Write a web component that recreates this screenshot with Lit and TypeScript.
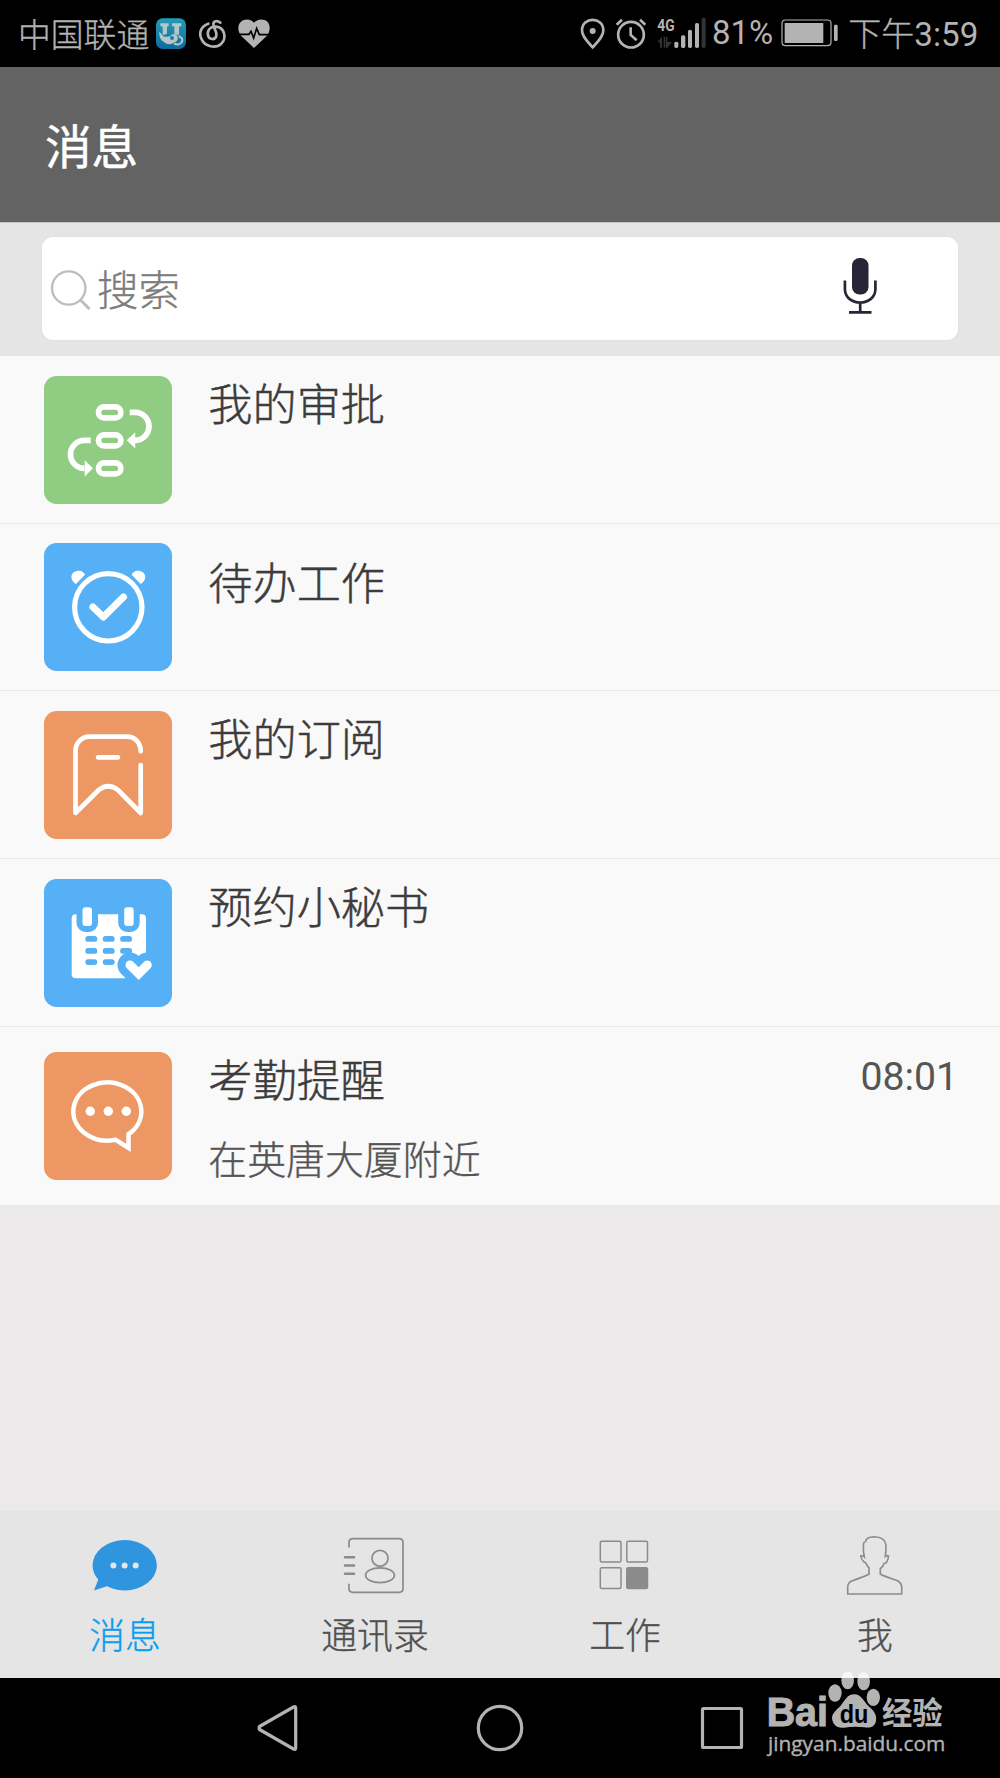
import { LitElement, html, svg, css, TemplateResult } from "lit";
import { customElement, property } from "lit/decorators.js";
import { classMap } from "lit/directives/class-map.js";

const FONT = css`Roboto, "Noto Sans CJK SC", sans-serif`;

/* ---------- status bar ---------- */
@customElement("status-bar")
class StatusBar extends LitElement {
  static styles = css`
    :host { display: flex; height: 67px; background: #000; color: #b3b3b3; font-family: ${FONT}; font-weight: 300; overflow: hidden; }
    svg { display: block; height: 66.67px; flex: none; fill: #b3b3b3; }
    .carrier { width: 134px; padding-left: 18px; box-sizing: content-box; font-size: 32.8px; line-height: 72px; white-space: nowrap; -webkit-text-stroke: 0.35px currentColor; }
    .app { width: 41.33px; }
    .music { width: 40px; }
    .heart { width: 42px; }
    .spacer { flex: 1; }
    .pin { width: 30px; }
    .alarm { width: 41.67px; }
    .signal { width: 58.33px; }
    .percent { width: 66.67px; font-size: 33px; line-height: 65px; white-space: nowrap; padding-left: 2px; box-sizing: border-box; font-weight: 400; }
    .battery { width: 66.67px; }
    .time { width: 156.67px; padding-left: 5px; box-sizing: border-box; font-size: 33px; line-height: 70px; white-space: nowrap; -webkit-text-stroke: 0.35px currentColor; }
    .digits { font-size: 33.200px; font-weight: 400; -webkit-text-stroke: 0; }
    .tiny { font: 700 52px Roboto, sans-serif; }
  `;
  render() {
    return html`
      <span class="carrier">中国联通</span>
      <svg class="app" viewBox="456 0 124 200">
        <defs><linearGradient id="g" x1="0" y1="0" x2="0" y2="1"><stop offset="0" stop-color="#229eb2" /><stop offset="1" stop-color="#10699f" /></linearGradient></defs>
        <rect x="468" y="55" width="90" height="92" rx="20" fill="url(#g)" />
        <path d="M481 70h25v8l-5 2v22l-13 3V80l-7-2zM516 70h28v8l-7 2v24h-14V80l-7-2z" fill="#b4c6c9" />
        <path d="M480 97l10 12q18 5 27-6 14-2 16 9t-9 15q-18 12-32-1-13-4-15-29z" fill="#b4c6c9" />
        <path d="M536 108q17 8 8 20-10 10-22 2" fill="none" stroke="#b4c6c9" stroke-width="6" />
        <circle cx="516" cy="114" r="6" fill="#167da8" />
      </svg>
      <svg class="music" viewBox="580 0 120 200">
        <path d="M626 71C604 78 596 99 606 118C616 140 648 147 665 131C682 113 675 83 649 80C631 78 622 92 625 106C628 120 646 121 650 108C653 93 641 85 641 72C642 61 654 62 662 68" fill="none" stroke="#b3b3b3" stroke-width="8" stroke-linecap="round" />
      </svg>
      <svg class="heart" viewBox="700 0 126 200">
        <path d="M763 144L724 107C712 91 713 69 730 61C744 55 757 60 763 68C770 60 783 55 797 61C813 69 814 91 802 107Z" />
        <path d="M716 103H748L754 94L762 114L771 85L779 104H810" fill="none" stroke="#000" stroke-width="5" />
      </svg>
      <span class="spacer"></span>
      <svg class="pin" viewBox="60 0 90 200">
        <path d="M98 142C84 126 66 111 66 91C66 49 130 49 130 91C130 111 112 126 98 142Z" fill="none" stroke="#b3b3b3" stroke-width="8" />
        <circle cx="98" cy="93" r="9" />
      </svg>
      <svg class="alarm" viewBox="150 0 125 200">
        <g fill="none" stroke="#b3b3b3" stroke-width="8"><circle cx="213" cy="104" r="38.500" /><path d="M170 74L186 59M256 74L240 59M212 82V105L230 121" /></g>
      </svg>
      <svg class="signal" viewBox="275 0 175 200">
        <text class="tiny" x="291" y="94" textLength="52" lengthAdjust="spacingAndGlyphs">4G</text>
        <path d="M291 127l14-17v33h-6v-16zM310 127V110h5v33h-5zM317 110h4v16h14l-14 17h-4z" fill="#333" />
        <rect x="342" y="125" width="12" height="19" rx="5" /><rect x="362" y="106" width="13" height="38" rx="5" /><rect x="383" y="89" width="12" height="55" rx="5" /><rect x="404" y="69" width="12" height="75" rx="5" />
        <rect x="424" y="53" width="12" height="91" rx="5" fill="#333" />
      </svg>
      <span class="percent">81%</span>
      <svg class="battery" viewBox="650 0 200 200">
        <rect x="665" y="60" width="147" height="77" rx="10" fill="none" stroke="#b3b3b3" stroke-width="3.500" />
        <rect x="673" y="69" width="116" height="60" rx="2" /><rect x="821" y="74" width="11" height="49" rx="4" />
      </svg>
      <span class="time">下午<span class="digits">3:59</span></span>
    `;
  }
}

/* ---------- message row ---------- */
const tiles: Record<string, { color: string; art: TemplateResult }> = {
  approval: {
    color: "#90cc82",
    art: svg`<g fill="none" stroke="#fff" stroke-width="5.700">
      <rect x="54.500" y="30.900" width="22.400" height="11" rx="5.500" /><rect x="54.500" y="58.900" width="22.400" height="11" rx="5.500" /><rect x="54.500" y="86.900" width="22.400" height="11" rx="5.500" />
      <path d="M85.700 36.300H91a14 14 0 0 1 0 28M46.700 64.300H40.500a14 14 0 0 0 0 28" /></g>
      <path d="M82.700 64.300L91.200 56.300V72.500ZM49 92.300L40.700 84.200V100.500Z" fill="#fff" />`,
  },
  todo: {
    color: "#55b0f5",
    art: svg`<circle cx="64.300" cy="64.300" r="33.700" fill="none" stroke="#fff" stroke-width="5.200" />
      <path d="M48.900 64L59.300 74L79.500 53.900" fill="none" stroke="#fff" stroke-width="7" stroke-linecap="round" stroke-linejoin="round" />
      <path d="M41 31.800L32 41C25 37 26 27.700 35 27.700C38 27.700 40 29.500 41 31.800ZM87.600 31.800L96.600 41C103.600 37 102.600 27.700 93.600 27.700C90.600 27.700 88.600 29.500 87.600 31.800Z" fill="#fff" />`,
  },
  subscribe: {
    color: "#ed9864",
    art: svg`<path d="M96.700 40.300C96.700 32 91 25.700 83 25.700H45.500C37.500 25.700 31.500 32 31.500 40V102L54.700 79Q64.300 71.500 74 79L96.700 102V54M54 46.300H74" fill="none" stroke="#fff" stroke-width="4.700" stroke-linecap="round" stroke-linejoin="round" />`,
  },
  booking: {
    color: "#55b0f5",
    art: svg`<rect x="27.700" y="35.300" width="74.300" height="64" rx="4" fill="#fff" />
      <g fill="#fff" stroke="#55b0f5" stroke-width="6"><rect x="35.500" y="25.300" width="15.500" height="24.700" rx="6" /><rect x="77.200" y="25.300" width="15.500" height="24.700" rx="6" /></g>
      <path d="M44.200 59.900h6.200M61.600 59.900h6.200M79 59.900h6.200M44.200 71.900h6.200M61.600 71.900h6.200M79 71.900h6.200M44.200 83.100h6.200M61.600 83.100h6.200" stroke="#55b0f5" stroke-width="5.800" stroke-linecap="round" />
      <path d="M86 86L94.700 94.700L103.300 86" fill="none" stroke="#55b0f5" stroke-width="25" stroke-linecap="round" />
      <path d="M86 86L94.700 94.700L103.300 86" fill="none" stroke="#fff" stroke-width="9" stroke-linecap="round" />`,
  },
  attendance: {
    color: "#ed9864",
    art: svg`<path d="M71.300 87.700A34 29 0 1 1 84.500 82.200V96L71.300 87.700Z" fill="none" stroke="#fff" stroke-width="4.500" />
      <g fill="#fff"><circle cx="46.300" cy="59.300" r="4.700" /><circle cx="64.300" cy="59.300" r="4.700" /><circle cx="82.300" cy="59.300" r="4.700" /></g>`,
  },
};

@customElement("message-row")
class MessageRow extends LitElement {
  static styles = css`
    :host { display: flex; box-sizing: border-box; height: 167.700px; padding: 20px 42px 0 44.300px; background: #f9f9f9; border-bottom: 1px solid #e9e9e9; font-family: ${FONT}; font-weight: 300; }
    :host([lowered]) { padding-top: 19.600px; }
    :host([detail]) { height: 178.300px; padding-top: 25.300px; border-bottom: 0; }
    svg { display: block; flex: none; width: 128px; height: 128px; }
    .body { flex: 1; margin-left: 36px; }
    .top { display: flex; justify-content: space-between; padding-top: 4px; }
    .title { font-size: 44.200px; line-height: 52px; color: #3c3c3c; white-space: nowrap; -webkit-text-stroke: 0.45px currentColor; }
    .lowered { padding-top: 11.500px; }
    .time { margin-top: -3px; font-size: 39.200px; line-height: 48px; color: #555; font-weight: 400; }
    .sub { margin-top: 27px; font-size: 38.900px; line-height: 52px; color: #555; white-space: nowrap; -webkit-text-stroke: 0.35px currentColor; }
  `;
  @property() icon = "";
  @property() label = "";
  @property() sub = "";
  @property() time = "";
  @property({ type: Boolean }) lowered = false;
  render() {
    const t = tiles[this.icon];
    return html`
      <svg viewBox="0 0 128 128"><rect width="128" height="128" rx="12.500" fill=${t.color} />${t.art}</svg>
      <div class="body">
        <div class="top">
          <span class=${classMap({ title: true, lowered: this.lowered })}>${this.label}</span>
          ${this.time ? html`<span class="time">${this.time}</span>` : ""}
        </div>
        ${this.sub ? html`<div class="sub">${this.sub}</div>` : ""}
      </div>
    `;
  }
}

/* ---------- tab bar ---------- */
const tabs: { label: string; active?: boolean; art: TemplateResult }[] = [
  {
    label: "消息",
    active: true,
    art: svg`<ellipse cx="35.700" cy="33.300" rx="32.200" ry="25.200" fill="#2f95df" /><path d="M9.700 46.500L5 58.500L20 53.500Z" fill="#2f95df" />
      <g fill="#e6e6e6"><circle cx="24.400" cy="33.500" r="3" /><circle cx="35.600" cy="33.500" r="3" /><circle cx="46.700" cy="33.500" r="3" /></g>`,
  },
  {
    label: "通讯录",
    art: svg`<g fill="none" stroke="#8c8a8a" stroke-width="1.700"><path d="M10 15.500V10.500Q10 6.700 14 6.700H60Q64 6.700 64 10.500V56.500Q64 60.300 60 60.300H14Q10 60.300 10 56.500V51.700" />
      <circle cx="41" cy="26.300" r="8" /><ellipse cx="41" cy="43.300" rx="14.400" ry="7.400" /><path d="M6 25.200H15M6 33.500H15M6 41.800H15" stroke-width="2.600" stroke-linecap="round" /></g>`,
  },
  {
    label: "工作",
    art: svg`<g fill="none" stroke="#8c8a8a" stroke-width="1.500"><rect x="11.300" y="9.300" width="20.700" height="20.700" rx="1.500" /><rect x="37.800" y="9.300" width="20.700" height="20.700" rx="1.500" /><rect x="11.300" y="35.800" width="20.700" height="20.700" rx="1.500" /><rect x="37.800" y="35.800" width="20.700" height="20.700" rx="1.500" fill="#8c8a8a" /></g>`,
  },
  {
    label: "我",
    art: svg`<path d="M8.700 62V54.700Q9 50.500 12.700 49Q27 44 30 42V35.700Q28 34.500 27 31L25 30Q22 27 21.700 24Q23 23 25.300 25Q24 19 24.500 12Q24.500 10 26.500 9.500Q27 5 35.300 4.700Q46 5 47 13Q47 19 46.300 24.500Q48 23 49.500 24Q49.500 27 47.500 30.500L45 31.500Q44.500 34 41.300 36.700V42Q44 44 58.700 48.700Q62.500 51 62.700 55V62Z" fill="none" stroke="#8c8a8a" stroke-width="1.600" />`,
  },
];

@customElement("tab-bar")
class TabBar extends LitElement {
  static styles = css`
    :host { display: grid; grid-template-columns: repeat(4, 1fr); height: 167px; background: #e5e5e5; font-family: ${FONT}; font-weight: 300; }
    .tab { display: flex; flex-direction: column; align-items: center; padding-top: 21px; color: #505050; font-size: 35.800px; line-height: 50px; -webkit-text-stroke: 0.35px currentColor; }
    .active { color: #0c9bee; }
    svg { display: block; width: 72px; height: 66px; margin-bottom: 14px; }
  `;
  render() {
    return tabs.map(
      (t) => html`<div class=${classMap({ tab: true, active: !!t.active })}><svg viewBox="0 0 72 66">${t.art}</svg><span>${t.label}</span></div>`
    );
  }
}

/* ---------- page ---------- */
@customElement("app-root")
class AppRoot extends LitElement {
  static styles = css`
    :host { display: flex; flex-direction: column; position: relative; width: 1000px; height: 1778px; background: #ebe9ea; font-family: ${FONT}; overflow: hidden; }
    status-bar, header, .search, tab-bar, nav { flex: none; }
    header { display: flex; align-items: center; box-sizing: border-box; height: 155px; padding: 0 0 3px 45px; background: #636363; color: #fff; font-size: 46.600px; font-weight: 400; -webkit-text-stroke: 0.5px currentColor; }
    .search { box-sizing: border-box; height: 134px; padding: 14px 42px 16px; background: #e5e5e5; border-top: 1px solid #c4c4c4; }
    .field { display: flex; align-items: center; box-sizing: border-box; height: 103px; padding: 0 80px 0 8px; background: #fff; border-radius: 11px; box-shadow: 0 0 0 1px #dedede80; }
    .lens { width: 42px; height: 42px; margin-top: 1px; }
    .hint { flex: 1; margin: 7px 0 0 5px; font-size: 41.500px; font-weight: 300; line-height: 60px; color: #7c7c7c; -webkit-text-stroke: 0.35px currentColor; }
    .mic { width: 36px; height: 60px; margin-bottom: 5px; }
    .list { flex: 1; display: flex; flex-direction: column; }
    message-row { flex: none; }
    nav { display: block; height: 100px; background: #000; }
    .keys { display: block; width: 1000px; height: 100px; }
    .mark { position: absolute; left: 750px; top: 1660px; width: 220px; height: 118px; }
    .bai { font-family: "Liberation Sans", sans-serif; font-weight: 700; }
    .du { font-family: "Liberation Sans", sans-serif; font-weight: 700; }
    .cn { font-family: "Noto Sans CJK SC", sans-serif; font-weight: 700; }
    .site { font-family: "Open Sans", "Noto Sans", sans-serif; font-weight: 400; }
  `;
  render() {
    return html`
      <status-bar></status-bar>
      <header>消息</header>
      <section class="search">
        <div class="field">
          <svg class="lens" viewBox="0 0 42 42" fill="none" stroke="#bdbdbd" stroke-width="2.300"><circle cx="18.700" cy="20" r="16.700" /><path d="M30.500 32L39.500 41" stroke-width="3" /></svg>
          <span class="hint">搜索</span>
          <svg class="mic" viewBox="0 0 36 60" fill="none" stroke="#272636" stroke-width="2.700"><rect x="10" y="2" width="16.500" height="36.500" rx="7.500" fill="#272636" stroke="none" /><path d="M2.900 24.500V33C2.900 51 33.400 51 33.400 33V24.500M18.200 46.500V56M7 56.300H29.500" /></svg>
        </div>
      </section>
      <main class="list">
        <message-row icon="approval" label="我的审批"></message-row>
        <message-row icon="todo" label="待办工作" lowered></message-row>
        <message-row icon="subscribe" label="我的订阅"></message-row>
        <message-row icon="booking" label="预约小秘书"></message-row>
        <message-row icon="attendance" label="考勤提醒" sub="在英唐大厦附近" time="08:01" detail></message-row>
      </main>
      <tab-bar></tab-bar>
      <nav>
        <svg class="keys" viewBox="0 0 1000 100" fill="none" stroke="#b3b3b3" stroke-width="3.200" stroke-linejoin="round">
          <path d="M259.500 48.500Q258.500 50 259.500 51.500L293.500 71Q295.700 72 295.700 70V30Q295.700 28 293.500 29Z" />
          <circle cx="500" cy="50" r="21.700" /><rect x="702.500" y="30.500" width="39" height="39" rx="1" />
        </svg>
      </nav>
      <svg class="mark" viewBox="0 0 660 354" fill="#fff" opacity="0.7">
        <text class="bai" x="50" y="199" font-size="124" stroke="#fff" stroke-width="3" textLength="184" lengthAdjust="spacingAndGlyphs">Bai</text>
        <ellipse cx="255" cy="99" rx="20" ry="26" /><ellipse cx="293" cy="61" rx="19" ry="27" /><ellipse cx="341" cy="64" rx="19" ry="27" /><ellipse cx="370" cy="112" rx="20" ry="26" />
        <path d="M313 103C335 103 342 126 356 139C372 152 381 165 378 182C375 200 362 205 343 202Q313 198 282 203C260 206 248 193 246 175C246 158 261 149 272 137C284 123 291 103 313 103Z" />
        <text class="du" x="269" y="189" font-size="75" fill="#000" textLength="86" lengthAdjust="spacingAndGlyphs">du</text>
        <text class="cn" x="396" y="192" font-size="93" textLength="182" lengthAdjust="spacingAndGlyphs">经验</text>
        <text class="site" x="54" y="273" font-size="62" stroke="#fff" stroke-width="0.800" textLength="532" lengthAdjust="spacingAndGlyphs">jingyan.baidu.com</text>
      </svg>
    `;
  }
}
